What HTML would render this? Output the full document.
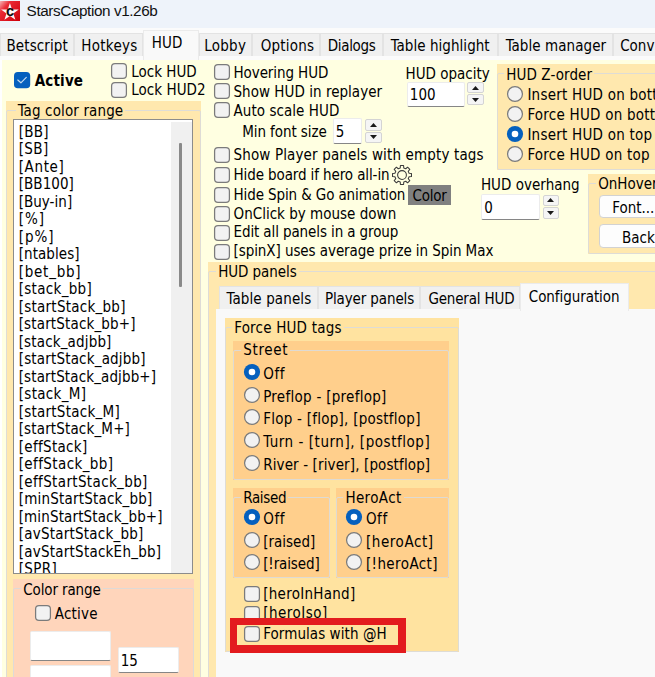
<!DOCTYPE html><html><head><meta charset="utf-8"><title>StarsCaption</title><style>
html,body{margin:0;padding:0}
body{width:655px;height:677px;overflow:hidden;position:relative;background:#fff;font-family:"DejaVu Sans Condensed","DejaVu Sans","Liberation Sans",sans-serif;font-size:15px;font-stretch:condensed;color:#000}
body div, body span, body svg{position:absolute}
.t{white-space:pre;line-height:18px;height:18px;color:#000}
.cb{width:16px;height:16px;box-sizing:border-box;border:1px solid #727272;border-radius:3.5px;background:#efefef}
.cb.on{border-color:#0560be;background:#0560be;border-radius:4px}
.cb svg{left:-1px;top:-1px}
.rb{width:16px;height:16px;box-sizing:border-box;border:1px solid #727272;border-radius:50%;background:#f4f4f4}
.rb.on{border:5px solid #0560be;background:#fff}
.tab{box-sizing:border-box;border:1px solid #e3e3e3;border-bottom:none;background:#f0f0f0}
.tab.sel{background:#f9f9f9;border-color:#ebebeb;border-bottom:none}
.lb{box-sizing:border-box;border:1px solid #8c8c8c;background:#fff;overflow:hidden}
.ed{box-sizing:border-box;background:#fff;border:1px solid #ececec;border-bottom:1.5px solid #868686;border-radius:2px}
.sp{box-sizing:border-box;background:#f5f5f5;border:1px solid #d4d4d4;border-radius:2px}
.u{font-style:normal;position:relative;top:-1.6px}
.btn{box-sizing:border-box;background:#fdfdfd;border:1px solid #d2d2d2;border-radius:4px}
</style></head><body>
<div style="left:0px;top:0px;width:655px;height:28px;background:#eef3fa;"></div>
<svg style="position:absolute;left:0;top:1px" width="20" height="20" viewBox="0 0 20 20"><defs><linearGradient id="g" x1="0" y1="0" x2="1" y2="0.9"><stop offset="0" stop-color="#f8b4b4"/><stop offset="0.3" stop-color="#ea2a34"/><stop offset="1" stop-color="#cf000c"/></linearGradient></defs><rect width="20" height="20" fill="url(#g)"/><path d="M9.90 2.00 L12.02 8.39 L18.74 8.43 L13.32 12.41 L15.37 18.82 L9.90 14.90 L4.43 18.82 L6.48 12.41 L1.06 8.43 L7.78 8.39 Z" fill="#fff" fill-opacity="0.96"/><text x="10" y="14.5" font-family="Liberation Sans,sans-serif" font-weight="bold" font-size="14.5" text-anchor="middle" fill="#0a0a0a">c</text></svg>
<span class="t" style="left:26.6px;top:2.2px;font-family:'Liberation Sans',sans-serif;font-size:15.3px;letter-spacing:-0.41px;color:#111">StarsCaption v1.26b</span>
<div style="left:0px;top:28px;width:655px;height:32px;background:#fbfbfb;"></div>
<div class="tab" style="left:0px;top:33px;width:74px;height:23px"></div>
<span class="t" style="left:6.5px;top:37.0px;letter-spacing:0.103px;">Betscript</span>
<div class="tab" style="left:74px;top:33px;width:69px;height:23px"></div>
<span class="t" style="left:81.2px;top:37.0px;letter-spacing:0.315px;">Hotkeys</span>
<div class="tab" style="left:199px;top:33px;width:53px;height:23px"></div>
<span class="t" style="left:204.2px;top:37.0px;letter-spacing:0.272px;">Lobby</span>
<div class="tab" style="left:252px;top:33px;width:68px;height:23px"></div>
<span class="t" style="left:260.7px;top:37.0px;letter-spacing:0.203px;">Options</span>
<div class="tab" style="left:320px;top:33px;width:63px;height:23px"></div>
<span class="t" style="left:327.8px;top:37.0px;letter-spacing:-0.347px;">Dialogs</span>
<div class="tab" style="left:383px;top:33px;width:115px;height:23px"></div>
<span class="t" style="left:390.7px;top:37.0px;letter-spacing:0.048px;">Table highlight</span>
<div class="tab" style="left:498px;top:33px;width:115px;height:23px"></div>
<span class="t" style="left:505.7px;top:37.0px;letter-spacing:0.069px;">Table manager</span>
<div class="tab" style="left:613px;top:33px;width:87px;height:23px"></div>
<span class="t" style="left:620.2px;top:37.0px;">Conv</span>
<div class="tab sel" style="left:143px;top:30px;width:55.5px;height:30px"></div>
<span class="t" style="left:151.7px;top:34.0px;letter-spacing:0.087px;">HUD</span>
<div style="left:2px;top:60px;width:653px;height:617px;background:#ffffe1;"></div>
<svg style="left:12.6px;top:70.6px" width="18" height="18" viewBox="-1 -1 18 18"><rect x="0" y="0" width="16.2" height="16.2" rx="3.8" fill="#0560be"/><path d="M3.8 8.0 L6.9 10.8 L12.3 5.3" fill="none" stroke="rgba(255,255,255,0.78)" stroke-width="1.15" stroke-linecap="round" stroke-linejoin="round"/></svg>
<span class="t" style="left:34.7px;top:72.3px;font-weight:bold;letter-spacing:0.172px;">Active</span>
<svg style="left:110.3px;top:61.7px" width="18" height="18" viewBox="-1 -1 18 18"><rect x="0.6" y="0.6" width="14.8" height="14.8" rx="3.4" fill="#f2f2f2" stroke="#7b7b7b" stroke-width="1.25"/></svg>
<span class="t" style="left:131.2px;top:62.5px;letter-spacing:0.006px;">Lock HUD</span>
<svg style="left:110.3px;top:80.9px" width="18" height="18" viewBox="-1 -1 18 18"><rect x="0.6" y="0.6" width="14.8" height="14.8" rx="3.4" fill="#f2f2f2" stroke="#7b7b7b" stroke-width="1.25"/></svg>
<span class="t" style="left:131.2px;top:81.3px;letter-spacing:0.050px;">Lock HUD2</span>
<div style="left:6px;top:101px;width:195px;height:596px;background:#ffe8ae;"></div>
<div style="left:6px;top:110px;width:195px;height:587px;border:1px solid rgba(218,218,218,0.9);border-radius:2px;box-sizing:border-box;background:none"></div>
<span class="t" style="left:15.7px;top:102.2px;background:#ffe8ae;padding:0 2px;letter-spacing:0.131px;">Tag color range</span>
<div class="lb" style="left:13px;top:119px;width:180px;height:455px">
<span class="t" style="left:4.7px;top:2.9px;letter-spacing:0.234px;">[BB]</span>
<span class="t" style="left:4.7px;top:20.4px;letter-spacing:0.410px;">[SB]</span>
<span class="t" style="left:4.7px;top:37.9px;letter-spacing:0.646px;">[Ante]</span>
<span class="t" style="left:4.7px;top:55.4px;letter-spacing:0.055px;">[BB100]</span>
<span class="t" style="left:4.7px;top:72.9px;letter-spacing:0.031px;">[Buy-in]</span>
<span class="t" style="left:4.7px;top:90.4px;letter-spacing:1.000px;">[%]</span>
<span class="t" style="left:4.7px;top:107.9px;letter-spacing:0.941px;">[p%]</span>
<span class="t" style="left:4.7px;top:125.4px;letter-spacing:0.076px;">[ntables]</span>
<span class="t" style="left:4.7px;top:142.9px;letter-spacing:0.751px;">[bet<i class="u">_</i>bb]</span>
<span class="t" style="left:4.7px;top:160.4px;letter-spacing:0.315px;">[stack<i class="u">_</i>bb]</span>
<span class="t" style="left:4.7px;top:177.9px;letter-spacing:0.253px;">[startStack<i class="u">_</i>bb]</span>
<span class="t" style="left:4.7px;top:195.4px;letter-spacing:0.155px;">[startStack<i class="u">_</i>bb+]</span>
<span class="t" style="left:4.7px;top:212.9px;letter-spacing:0.152px;">[stack<i class="u">_</i>adjbb]</span>
<span class="t" style="left:4.7px;top:230.4px;letter-spacing:0.178px;">[startStack<i class="u">_</i>adjbb]</span>
<span class="t" style="left:4.7px;top:247.9px;letter-spacing:0.126px;">[startStack<i class="u">_</i>adjbb+]</span>
<span class="t" style="left:4.7px;top:265.4px;letter-spacing:0.328px;">[stack<i class="u">_</i>M]</span>
<span class="t" style="left:4.7px;top:282.9px;letter-spacing:0.249px;">[startStack<i class="u">_</i>M]</span>
<span class="t" style="left:4.7px;top:300.4px;letter-spacing:0.152px;">[startStack<i class="u">_</i>M+]</span>
<span class="t" style="left:4.7px;top:317.9px;letter-spacing:0.320px;">[effStack]</span>
<span class="t" style="left:4.7px;top:335.4px;letter-spacing:0.393px;">[effStack<i class="u">_</i>bb]</span>
<span class="t" style="left:4.7px;top:352.9px;letter-spacing:0.359px;">[effStartStack<i class="u">_</i>bb]</span>
<span class="t" style="left:4.7px;top:370.4px;letter-spacing:0.200px;">[minStartStack<i class="u">_</i>bb]</span>
<span class="t" style="left:4.7px;top:387.9px;letter-spacing:0.132px;">[minStartStack<i class="u">_</i>bb+]</span>
<span class="t" style="left:4.7px;top:405.4px;letter-spacing:0.224px;">[avStartStack<i class="u">_</i>bb]</span>
<span class="t" style="left:4.7px;top:422.9px;letter-spacing:0.238px;">[avStartStackEh<i class="u">_</i>bb]</span>
<span class="t" style="left:4.7px;top:440.4px;letter-spacing:0.355px;">[SPR]</span>
<div style="left:157px;top:2px;width:21px;height:451px;background:#f0f0f0"></div>
<div style="left:165.4px;top:23px;width:2.8px;height:144px;background:#8a8a8a;border-radius:1px"></div>
</div>
<div style="left:13px;top:579px;width:181px;height:120px;background:#ffd5bb;"></div>
<div style="left:13px;top:587.5px;width:181px;height:111.5px;border:1px solid rgba(218,218,218,0.9);border-radius:2px;box-sizing:border-box;background:none"></div>
<span class="t" style="left:21.2px;top:580.6px;background:#ffd5bb;padding:0 2px;letter-spacing:-0.115px;">Color range</span>
<svg style="left:34.2px;top:604.3px" width="18" height="18" viewBox="-1 -1 18 18"><rect x="0.6" y="0.6" width="14.8" height="14.8" rx="3.4" fill="#f2f2f2" stroke="#7b7b7b" stroke-width="1.25"/></svg>
<span class="t" style="left:54.8px;top:605.2px;letter-spacing:0.197px;">Active</span>
<div class="ed" style="left:29.6px;top:631.2px;width:81px;height:30.2px"></div>
<div class="ed" style="left:29.5px;top:664.6px;width:81.5px;height:29px"></div>
<div class="ed" style="left:117.5px;top:646.8px;width:61.8px;height:26.6px"></div>
<span class="t" style="left:120.7px;top:652.2px;">15</span>
<svg style="left:212.8px;top:63.0px" width="18" height="18" viewBox="-1 -1 18 18"><rect x="0.6" y="0.6" width="14.8" height="14.8" rx="3.4" fill="#f2f2f2" stroke="#7b7b7b" stroke-width="1.25"/></svg>
<span class="t" style="left:233.5px;top:64.0px;letter-spacing:-0.086px;">Hovering HUD</span>
<svg style="left:212.8px;top:82.0px" width="18" height="18" viewBox="-1 -1 18 18"><rect x="0.6" y="0.6" width="14.8" height="14.8" rx="3.4" fill="#f2f2f2" stroke="#7b7b7b" stroke-width="1.25"/></svg>
<span class="t" style="left:233.5px;top:83.2px;letter-spacing:0.032px;">Show HUD in replayer</span>
<svg style="left:212.8px;top:101.0px" width="18" height="18" viewBox="-1 -1 18 18"><rect x="0.6" y="0.6" width="14.8" height="14.8" rx="3.4" fill="#f2f2f2" stroke="#7b7b7b" stroke-width="1.25"/></svg>
<span class="t" style="left:233.5px;top:102.0px;letter-spacing:0.056px;">Auto scale HUD</span>
<svg style="left:212.8px;top:145.6px" width="18" height="18" viewBox="-1 -1 18 18"><rect x="0.6" y="0.6" width="14.8" height="14.8" rx="3.4" fill="#f2f2f2" stroke="#7b7b7b" stroke-width="1.25"/></svg>
<span class="t" style="left:233.5px;top:146.2px;letter-spacing:0.141px;">Show Player panels with empty tags</span>
<svg style="left:212.8px;top:165.8px" width="18" height="18" viewBox="-1 -1 18 18"><rect x="0.6" y="0.6" width="14.8" height="14.8" rx="3.4" fill="#f2f2f2" stroke="#7b7b7b" stroke-width="1.25"/></svg>
<span class="t" style="left:233.5px;top:166.2px;letter-spacing:-0.106px;">Hide board if hero all-in</span>
<svg style="left:212.8px;top:185.9px" width="18" height="18" viewBox="-1 -1 18 18"><rect x="0.6" y="0.6" width="14.8" height="14.8" rx="3.4" fill="#f2f2f2" stroke="#7b7b7b" stroke-width="1.25"/></svg>
<span class="t" style="left:233.5px;top:185.6px;letter-spacing:-0.110px;">Hide Spin &amp; Go animation</span>
<svg style="left:212.8px;top:205.0px" width="18" height="18" viewBox="-1 -1 18 18"><rect x="0.6" y="0.6" width="14.8" height="14.8" rx="3.4" fill="#f2f2f2" stroke="#7b7b7b" stroke-width="1.25"/></svg>
<span class="t" style="left:233.5px;top:204.8px;letter-spacing:0.012px;">OnClick by mouse down</span>
<svg style="left:212.8px;top:223.7px" width="18" height="18" viewBox="-1 -1 18 18"><rect x="0.6" y="0.6" width="14.8" height="14.8" rx="3.4" fill="#f2f2f2" stroke="#7b7b7b" stroke-width="1.25"/></svg>
<span class="t" style="left:233.5px;top:223.3px;letter-spacing:-0.109px;">Edit all panels in a group</span>
<svg style="left:212.8px;top:242.8px" width="18" height="18" viewBox="-1 -1 18 18"><rect x="0.6" y="0.6" width="14.8" height="14.8" rx="3.4" fill="#f2f2f2" stroke="#7b7b7b" stroke-width="1.25"/></svg>
<span class="t" style="left:233.5px;top:242.4px;letter-spacing:-0.070px;">[spinX] uses average prize in Spin Max</span>
<span class="t" style="left:242.2px;top:123.2px;letter-spacing:-0.081px;">Min font size</span>
<div class="ed" style="left:332.6px;top:118px;width:29.8px;height:26px"></div>
<span class="t" style="left:335.8px;top:123.0px;">5</span>
<div class="sp" style="left:365.3px;top:119.4px;width:16.5px;height:11.3px"><svg width="7" height="4" viewBox="0 0 7 4" style="position:absolute;left:3.75px;top:2.6500000000000004px"><path d="M0 4 L3.5 0 L7 4 Z" fill="#1a1a1a"/></svg></div>
<div class="sp" style="left:365.3px;top:131.70000000000002px;width:16.5px;height:11.3px"><svg width="7" height="4" viewBox="0 0 7 4" style="position:absolute;left:3.75px;top:2.6500000000000004px"><path d="M0 0 L7 0 L3.5 4 Z" fill="#1a1a1a"/></svg></div>
<svg style="position:absolute;left:391.2px;top:164.2px" width="22" height="22" viewBox="0 0 22 22"><g fill="none" stroke="#3c3c3c" stroke-width="1.05" stroke-linejoin="round"><circle cx="11" cy="11" r="4.4"/><path d="M9.24 3.92 L9.42 1.53 L12.58 1.53 L12.76 3.92 L14.77 4.75 L16.58 3.19 L18.81 5.42 L17.25 7.23 L18.08 9.24 L20.47 9.42 L20.47 12.58 L18.08 12.76 L17.25 14.77 L18.81 16.58 L16.58 18.81 L14.77 17.25 L12.76 18.08 L12.58 20.47 L9.42 20.47 L9.24 18.08 L7.23 17.25 L5.42 18.81 L3.19 16.58 L4.75 14.77 L3.92 12.76 L1.53 12.58 L1.53 9.42 L3.92 9.24 L4.75 7.23 L3.19 5.42 L5.42 3.19 L7.23 4.75 Z"/></g></svg>
<div style="left:408.3px;top:185px;width:42.3px;height:20px;background:#808080;"></div>
<span class="t" style="left:412.5px;top:186.6px;letter-spacing:-0.207px;">Color</span>
<span class="t" style="left:405.6px;top:64.7px;letter-spacing:-0.014px;">HUD opacity</span>
<div class="ed" style="left:406.6px;top:81.6px;width:58.3px;height:25.8px"></div>
<span class="t" style="left:409.8px;top:85.7px;">100</span>
<div class="sp" style="left:467.3px;top:82.3px;width:17px;height:11.1px"><svg width="7" height="4" viewBox="0 0 7 4" style="position:absolute;left:4.0px;top:2.55px"><path d="M0 4 L3.5 0 L7 4 Z" fill="#1a1a1a"/></svg></div>
<div class="sp" style="left:467.3px;top:94.39999999999999px;width:17px;height:11.1px"><svg width="7" height="4" viewBox="0 0 7 4" style="position:absolute;left:4.0px;top:2.55px"><path d="M0 0 L7 0 L3.5 4 Z" fill="#1a1a1a"/></svg></div>
<div style="left:497px;top:64px;width:170px;height:106px;background:#ffe8ae;"></div>
<div style="left:497px;top:73px;width:170px;height:97px;border:1px solid rgba(218,218,218,0.9);border-radius:2px;box-sizing:border-box;background:none"></div>
<span class="t" style="left:504.2px;top:65.8px;background:#ffe8ae;padding:0 2px;letter-spacing:0.109px;">HUD Z-order</span>
<svg style="left:505.8px;top:85.0px" width="18" height="18" viewBox="-1 -1 18 18"><circle cx="8" cy="8" r="7.45" fill="#f2f2f2" stroke="#7b7b7b" stroke-width="1.25"/></svg>
<span class="t" style="left:527.4px;top:86.0px;letter-spacing:0.24px;">Insert HUD on bottom</span>
<svg style="left:505.8px;top:105.0px" width="18" height="18" viewBox="-1 -1 18 18"><circle cx="8" cy="8" r="7.45" fill="#f2f2f2" stroke="#7b7b7b" stroke-width="1.25"/></svg>
<span class="t" style="left:527.4px;top:106.0px;letter-spacing:0.24px;">Force HUD on bottom</span>
<svg style="left:505.8px;top:125.0px" width="18" height="18" viewBox="-1 -1 18 18"><circle cx="8" cy="8" r="8.1" fill="#0560be"/><circle cx="8" cy="8" r="3.3" fill="#fff"/></svg>
<span class="t" style="left:527.4px;top:126.0px;letter-spacing:0.24px;">Insert HUD on top</span>
<svg style="left:505.8px;top:145.0px" width="18" height="18" viewBox="-1 -1 18 18"><circle cx="8" cy="8" r="7.45" fill="#f2f2f2" stroke="#7b7b7b" stroke-width="1.25"/></svg>
<span class="t" style="left:527.4px;top:146.0px;letter-spacing:0.24px;">Force HUD on top</span>
<span class="t" style="left:480.9px;top:176.3px;letter-spacing:0.026px;">HUD overhang</span>
<div class="ed" style="left:481px;top:194px;width:59px;height:26px"></div>
<span class="t" style="left:484.2px;top:199.0px;">0</span>
<div class="sp" style="left:542.6px;top:194.5px;width:16.5px;height:11.75px"><svg width="7" height="4" viewBox="0 0 7 4" style="position:absolute;left:3.75px;top:2.875px"><path d="M0 4 L3.5 0 L7 4 Z" fill="#1a1a1a"/></svg></div>
<div class="sp" style="left:542.6px;top:207.25px;width:16.5px;height:11.75px"><svg width="7" height="4" viewBox="0 0 7 4" style="position:absolute;left:3.75px;top:2.875px"><path d="M0 0 L7 0 L3.5 4 Z" fill="#1a1a1a"/></svg></div>
<div style="left:588px;top:174.4px;width:80px;height:79.4px;background:#ffe8ae;"></div>
<div style="left:588px;top:183px;width:80px;height:70.80000000000001px;border:1px solid rgba(218,218,218,0.9);border-radius:2px;box-sizing:border-box;background:none"></div>
<span class="t" style="left:596.2px;top:175.2px;background:#ffe8ae;padding:0 2px;">OnHover</span>
<div class="btn" style="left:598.6px;top:194.6px;width:80px;height:23.6px"></div>
<span class="t" style="left:612.2px;top:199.0px;">Font...</span>
<div class="btn" style="left:598.6px;top:224.4px;width:80px;height:24px"></div>
<span class="t" style="left:622.0px;top:229.0px;">Background</span>
<div style="left:208px;top:261.5px;width:460px;height:430px;background:#ffe8ae;"></div>
<div style="left:208px;top:271px;width:460px;height:420.5px;border:1px solid rgba(218,218,218,0.9);border-radius:2px;box-sizing:border-box;background:none"></div>
<span class="t" style="left:216.2px;top:262.8px;background:#ffe8ae;padding:0 2px;letter-spacing:-0.070px;">HUD panels</span>
<div class="tab" style="left:219px;top:286px;width:99px;height:23px"></div>
<span class="t" style="left:226.6px;top:290.0px;letter-spacing:0.107px;">Table panels</span>
<div class="tab" style="left:318px;top:286px;width:102px;height:23px"></div>
<span class="t" style="left:324.9px;top:290.0px;letter-spacing:-0.113px;">Player panels</span>
<div class="tab" style="left:420px;top:286px;width:100px;height:23px"></div>
<span class="t" style="left:428.4px;top:290.0px;letter-spacing:-0.164px;">General HUD</span>
<div style="left:216px;top:309px;width:450px;height:380px;background:#f9f9f9;"></div>
<div class="tab sel" style="left:520px;top:283px;width:108.6px;height:28px"></div>
<span class="t" style="left:528.8px;top:288.3px;letter-spacing:-0.064px;">Configuration</span>
<div style="left:225px;top:318px;width:234px;height:334px;background:#ffe3a0;"></div>
<div style="left:225px;top:327px;width:234px;height:325px;border:1px solid rgba(218,218,218,0.9);border-radius:2px;box-sizing:border-box;background:none"></div>
<span class="t" style="left:232.2px;top:319.4px;background:#ffe3a0;padding:0 2px;letter-spacing:0.209px;">Force HUD tags</span>
<div style="left:233px;top:340.6px;width:215.8px;height:139.8px;background:#ffcf8c;"></div>
<div style="left:233px;top:350px;width:215.8px;height:130.40000000000003px;border:1px solid rgba(218,218,218,0.9);border-radius:2px;box-sizing:border-box;background:none"></div>
<span class="t" style="left:241.2px;top:341.3px;background:#ffcf8c;padding:0 2px;letter-spacing:0.686px;">Street</span>
<svg style="left:242.5px;top:362.8px" width="18" height="18" viewBox="-1 -1 18 18"><circle cx="8" cy="8" r="8.1" fill="#0560be"/><circle cx="8" cy="8" r="3.3" fill="#fff"/></svg>
<span class="t" style="left:263.2px;top:365.0px;letter-spacing:0.593px;">Off</span>
<svg style="left:242.5px;top:385.5px" width="18" height="18" viewBox="-1 -1 18 18"><circle cx="8" cy="8" r="7.45" fill="#f2f2f2" stroke="#7b7b7b" stroke-width="1.25"/></svg>
<span class="t" style="left:263.2px;top:387.7px;letter-spacing:0.283px;">Preflop - [preflop]</span>
<svg style="left:242.5px;top:408.2px" width="18" height="18" viewBox="-1 -1 18 18"><circle cx="8" cy="8" r="7.45" fill="#f2f2f2" stroke="#7b7b7b" stroke-width="1.25"/></svg>
<span class="t" style="left:263.2px;top:410.4px;letter-spacing:0.251px;">Flop - [flop], [postflop]</span>
<svg style="left:242.5px;top:430.9px" width="18" height="18" viewBox="-1 -1 18 18"><circle cx="8" cy="8" r="7.45" fill="#f2f2f2" stroke="#7b7b7b" stroke-width="1.25"/></svg>
<span class="t" style="left:263.2px;top:433.1px;letter-spacing:0.541px;">Turn - [turn], [postflop]</span>
<svg style="left:242.5px;top:453.6px" width="18" height="18" viewBox="-1 -1 18 18"><circle cx="8" cy="8" r="7.45" fill="#f2f2f2" stroke="#7b7b7b" stroke-width="1.25"/></svg>
<span class="t" style="left:263.2px;top:455.8px;letter-spacing:0.128px;">River - [river], [postflop]</span>
<div style="left:233px;top:488px;width:96.5px;height:89.7px;background:#ffcf8c;"></div>
<div style="left:233px;top:496.6px;width:96.5px;height:81.10000000000002px;border:1px solid rgba(218,218,218,0.9);border-radius:2px;box-sizing:border-box;background:none"></div>
<span class="t" style="left:241.2px;top:489.0px;background:#ffcf8c;padding:0 2px;letter-spacing:-0.331px;">Raised</span>
<div style="left:336px;top:488px;width:112.8px;height:89.7px;background:#ffcf8c;"></div>
<div style="left:336px;top:496.6px;width:112.8px;height:81.10000000000002px;border:1px solid rgba(218,218,218,0.9);border-radius:2px;box-sizing:border-box;background:none"></div>
<span class="t" style="left:343.4px;top:489.0px;background:#ffcf8c;padding:0 2px;letter-spacing:0.384px;">HeroAct</span>
<svg style="left:242.5px;top:508.0px" width="18" height="18" viewBox="-1 -1 18 18"><circle cx="8" cy="8" r="8.1" fill="#0560be"/><circle cx="8" cy="8" r="3.3" fill="#fff"/></svg>
<span class="t" style="left:263.2px;top:510.3px;letter-spacing:0.593px;">Off</span>
<svg style="left:344.8px;top:508.0px" width="18" height="18" viewBox="-1 -1 18 18"><circle cx="8" cy="8" r="8.1" fill="#0560be"/><circle cx="8" cy="8" r="3.3" fill="#fff"/></svg>
<span class="t" style="left:365.9px;top:510.3px;letter-spacing:0.593px;">Off</span>
<svg style="left:242.5px;top:530.5px" width="18" height="18" viewBox="-1 -1 18 18"><circle cx="8" cy="8" r="7.45" fill="#f2f2f2" stroke="#7b7b7b" stroke-width="1.25"/></svg>
<span class="t" style="left:263.2px;top:532.8px;letter-spacing:0.011px;">[raised]</span>
<svg style="left:344.8px;top:530.5px" width="18" height="18" viewBox="-1 -1 18 18"><circle cx="8" cy="8" r="7.45" fill="#f2f2f2" stroke="#7b7b7b" stroke-width="1.25"/></svg>
<span class="t" style="left:365.9px;top:532.8px;letter-spacing:0.584px;">[heroAct]</span>
<svg style="left:242.5px;top:553.0px" width="18" height="18" viewBox="-1 -1 18 18"><circle cx="8" cy="8" r="7.45" fill="#f2f2f2" stroke="#7b7b7b" stroke-width="1.25"/></svg>
<span class="t" style="left:263.2px;top:555.3px;letter-spacing:-0.114px;">[!raised]</span>
<svg style="left:344.8px;top:553.0px" width="18" height="18" viewBox="-1 -1 18 18"><circle cx="8" cy="8" r="7.45" fill="#f2f2f2" stroke="#7b7b7b" stroke-width="1.25"/></svg>
<span class="t" style="left:365.9px;top:555.3px;letter-spacing:0.415px;">[!heroAct]</span>
<svg style="left:242.5px;top:584.8px" width="18" height="18" viewBox="-1 -1 18 18"><rect x="0.6" y="0.6" width="14.8" height="14.8" rx="3.4" fill="#f2f2f2" stroke="#7b7b7b" stroke-width="1.25"/></svg>
<span class="t" style="left:263.2px;top:585.3px;letter-spacing:0.279px;">[heroInHand]</span>
<svg style="left:242.5px;top:604.6px" width="18" height="18" viewBox="-1 -1 18 18"><rect x="0.6" y="0.6" width="14.8" height="14.8" rx="3.4" fill="#f2f2f2" stroke="#7b7b7b" stroke-width="1.25"/></svg>
<span class="t" style="left:263.2px;top:603.6px;letter-spacing:0.486px;">[heroIso]</span>
<div style="left:230px;top:617.6px;width:175.8px;height:35.1px;background:#e31b1e;"></div>
<div style="left:237.4px;top:625.2px;width:160.7px;height:19.4px;background:#ffe3a0;"></div>
<svg style="left:242.5px;top:624.8px" width="18" height="18" viewBox="-1 -1 18 18"><rect x="0.6" y="0.6" width="14.8" height="14.8" rx="3.4" fill="#f2f2f2" stroke="#7b7b7b" stroke-width="1.25"/></svg>
<span class="t" style="left:263.2px;top:624.6px;letter-spacing:0.070px;">Formulas with @H</span>
</body></html>
